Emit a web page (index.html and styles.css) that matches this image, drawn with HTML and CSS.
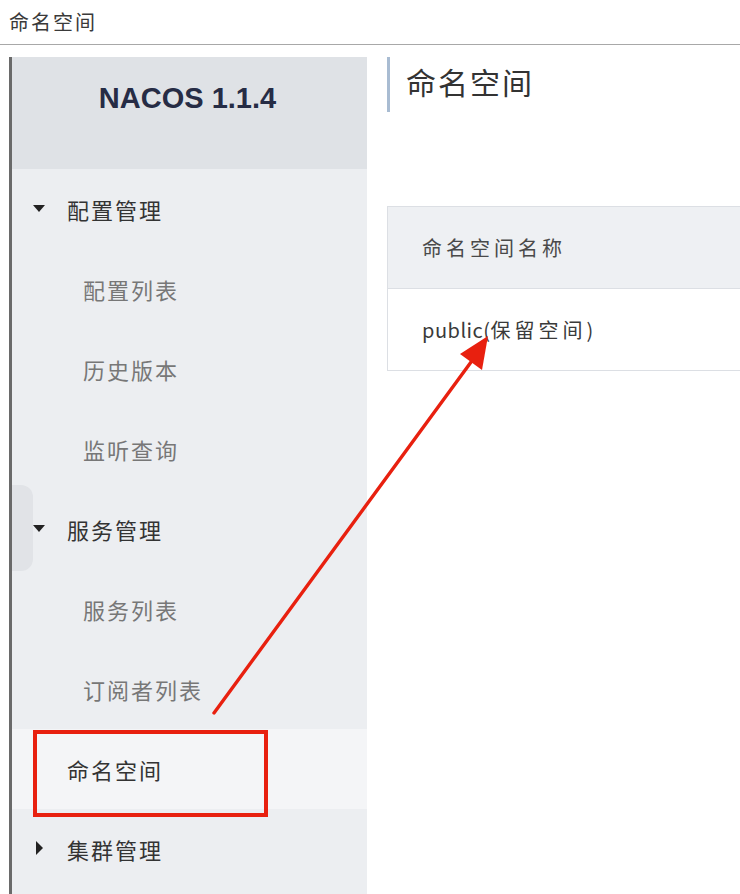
FILE: index.html
```html
<!DOCTYPE html>
<html lang="zh">
<head>
<meta charset="utf-8">
<title>命名空间</title>
<link rel="stylesheet" href="styles.css">
</head>
<body>
<div class="topbar">命名空间</div>
<div class="main">
  <aside class="sidebar">
    <div class="brand">NACOS 1.1.4</div>
    <div class="bump"></div>
    <ul class="menu">
      <li class="group"><span class="caret down"></span>配置管理</li>
      <li class="sub">配置列表</li>
      <li class="sub">历史版本</li>
      <li class="sub">监听查询</li>
      <li class="group"><span class="caret down"></span>服务管理</li>
      <li class="sub">服务列表</li>
      <li class="sub">订阅者列表</li>
      <li class="single active">命名空间</li>
      <li class="group"><span class="caret right"></span>集群管理</li>
    </ul>
  </aside>
  <section class="content">
    <h1 class="page-title">命名空间</h1>
    <div class="table">
      <div class="thead">命名空间名称</div>
      <div class="trow">public(<span class="cjk">保留空间</span>)</div>
    </div>
  </section>
</div>
<svg class="annot" width="740" height="894" viewBox="0 0 740 894">
  <rect x="35" y="732" width="231" height="83" fill="none" stroke="#e8200f" stroke-width="4"/>
  <line x1="214" y1="713" x2="474" y2="358" stroke="#e8200f" stroke-width="3.4" stroke-linecap="round"/>
  <polygon points="488,336 482,370 460,354" fill="#e8200f"/>
</svg>
</body>
</html>
```
FILE: styles.css
```css
* { box-sizing: border-box; }
html, body { margin: 0; padding: 0; }
body {
  width: 740px;
  height: 894px;
  overflow: hidden;
  background: #fff;
  font-family: "Noto Sans CJK SC", "Noto Sans", sans-serif;
  position: relative;
}
.topbar {
  height: 45px;
  line-height: 44px;
  padding-left: 9px;
  font-size: 20px;
  letter-spacing: 2px;
  color: #3a3a3a;
  border-bottom: 1px solid #a8a8a8;
}
.main {
  display: flex;
  margin-top: 12px;
  height: 837px;
}
.sidebar {
  position: relative;
  margin-left: 9px;
  width: 358px;
  flex: none;
  border-left: 3px solid #6a6a6a;
  background: #eceef1;
}
.brand {
  height: 112px;
  background: #dfe2e6;
  text-align: center;
  padding-top: 26px;
  line-height: 30px;
  font-family: "Liberation Sans", Arial, sans-serif;
  font-weight: bold;
  font-size: 29px;
  color: #262c45;
  padding-right: 4px;
}
.bump {
  position: absolute;
  left: 0;
  top: 428px;
  width: 21px;
  height: 86px;
  background: #e1e3e7;
  border-radius: 0 12px 12px 0;
}
.menu {
  list-style: none;
  margin: 0;
  padding: 0;
  position: relative;
}
.menu li {
  height: 80px;
  line-height: 80px;
  font-size: 22px;
  letter-spacing: 2px;
  white-space: nowrap;
}
.group {
  color: #333;
  padding-left: 55px;
  position: relative;
}
.sub {
  color: #777;
  padding-left: 71px;
}
.single {
  color: #333;
  padding-left: 55px;
}
.active {
  background: #f4f5f7;
}
.caret {
  position: absolute;
  width: 0;
  height: 0;
}
.caret.down {
  left: 21px;
  top: 36px;
  border-left: 6px solid transparent;
  border-right: 6px solid transparent;
  border-top: 7px solid #222;
}
.caret.right {
  left: 24px;
  top: 32px;
  border-top: 7px solid transparent;
  border-bottom: 7px solid transparent;
  border-left: 7px solid #222;
}
.content {
  flex: 1;
  padding-left: 20px;
  min-width: 0;
}
.page-title {
  margin: 0;
  height: 55px;
  line-height: 48px;
  border-left: 3px solid #a9bcd2;
  padding-left: 16px;
  font-size: 30px;
  font-weight: normal;
  letter-spacing: 2px;
  color: #333;
}
.table {
  margin-top: 94px;
  border: 1px solid #dcdfe4;
  border-right: none;
}
.thead {
  height: 82px;
  line-height: 82px;
  background: #eef0f3;
  border-bottom: 1px solid #dcdfe4;
  padding-left: 34px;
  font-size: 20px;
  letter-spacing: 4px;
  color: #4a4a4a;
  white-space: nowrap;
}
.trow {
  height: 81px;
  line-height: 81px;
  padding-left: 34px;
  font-size: 20px;
  letter-spacing: 0.5px;
  color: #3a3a3a;
  background: #fff;
  white-space: nowrap;
}
.cjk {
  letter-spacing: 4px;
}
.annot {
  position: absolute;
  left: 0;
  top: 0;
  pointer-events: none;
}
```
